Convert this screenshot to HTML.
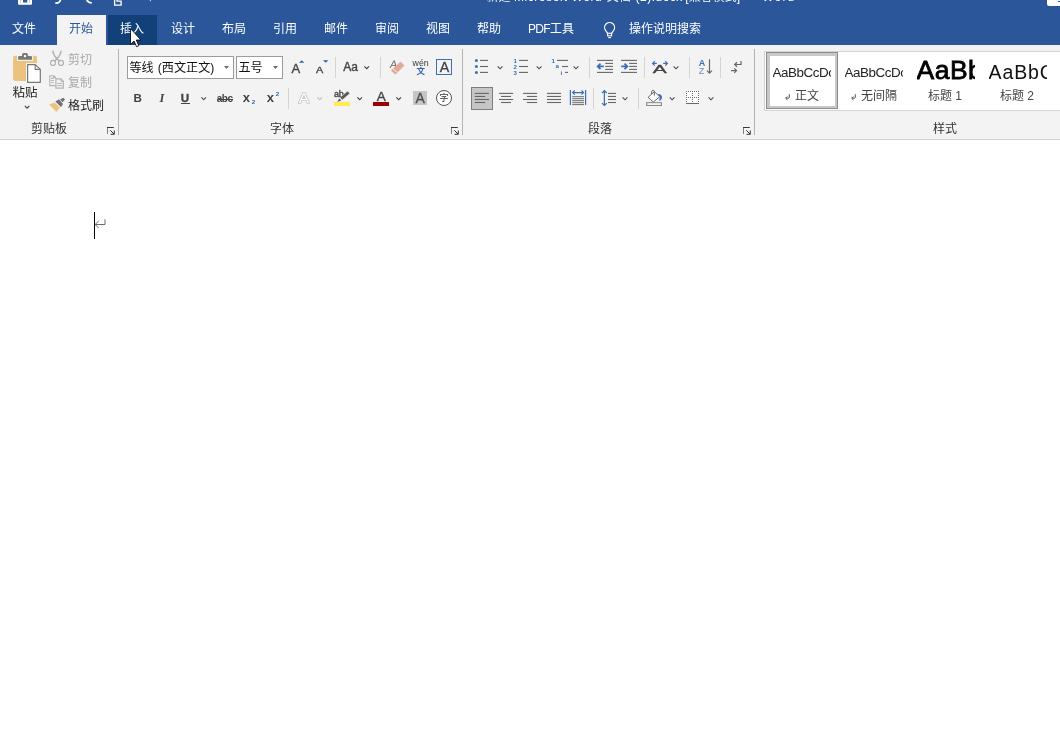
<!DOCTYPE html>
<html lang="zh-CN">
<head>
<meta charset="utf-8">
<title>Word</title>
<style>
*{box-sizing:border-box;margin:0;padding:0}
html,body{width:1060px;height:735px;overflow:hidden;background:#fff}
body{position:relative;font-family:"Liberation Sans","Noto Sans CJK SC",sans-serif;font-size:12.5px;color:#262626;font-weight:350}
#app{position:absolute;left:0;top:0;width:1060px;height:735px;overflow:hidden;will-change:transform}
.abs{position:absolute}
#title{position:absolute;left:0;top:0;width:1060px;height:45px;background:#2b579a}
#ribbon{position:absolute;left:0;top:45px;width:1060px;height:95px;background:#f3f3f3;border-bottom:1px solid #d2d2d2}
.tab{position:absolute;top:15.400px;height:29px;line-height:29px;color:#fff;font-weight:400;font-size:12px;white-space:nowrap}
.t{position:absolute;white-space:nowrap;line-height:16px;height:16px}
.g{color:#a8a8a8;font-weight:400}
.sep{position:absolute;width:1px;background:#d4d4d4}
.gsep{position:absolute;width:1px;background:#b4b4b4;top:49px;height:86px}
svg{position:absolute;overflow:visible}
.lbl{position:absolute;top:121.400px;height:16px;line-height:16px;font-size:12px;color:#333;font-weight:400;white-space:nowrap}
.box{position:absolute;top:56px;height:23px;background:#fff;border:1px solid #9c9c9c}
.chev{position:absolute;width:5.400px;height:3.600px}
.ic{position:absolute;white-space:nowrap;color:#444;font-weight:400}
.sb{-webkit-text-stroke:.35px currentColor}
.st{position:absolute;top:56px;height:28px;overflow:hidden;white-space:nowrap;color:#111;font-weight:400}
.st span{position:absolute;left:0}
.s1{font-size:13.400px;letter-spacing:-.45px;line-height:16px;top:8.500px;color:#222}
.s2{font-size:26.500px;font-weight:400;-webkit-text-stroke:.8px #000;letter-spacing:.5px;line-height:30px;top:-.700px;color:#000}
.s3{font-size:19.500px;letter-spacing:.9px;line-height:24px;top:4.200px;color:#111}
.sn{position:absolute;top:88.300px;height:16px;line-height:16px;font-size:12px;color:#444;font-weight:400;white-space:nowrap}
.ts{position:absolute;top:0}
</style>
</head>
<body>
<div id="app">
<div id="title"></div>
<div id="ribbon"></div>

<!-- TITLE-CONTENT -->
<div class="t" style="left:486.500px;top:-11.500px;color:#fff;font-size:12px"><span class="ts" style="left:0">新建</span><span class="ts" style="left:27.500px;letter-spacing:.55px">Microsoft Word</span><span class="ts" style="left:120.300px">文档</span><span class="ts" style="left:149px;letter-spacing:.5px">(2).docx</span><span class="ts" style="left:198.800px">[兼容模式]</span><span class="ts" style="left:261px">-</span><span class="ts" style="left:275.800px;letter-spacing:1.150px">Word</span></div>
<!-- quick access icons (clipped at top) -->
<svg style="left:0;top:0" width="160" height="8" viewBox="0 0 160 8"><path d="M18 -1H32V3.700a1 1 0 0 1-1 1H19a1 1 0 0 1-1-1z" fill="#fff"/><rect x="23" y="-1" width="4.300" height="3.500" fill="#2b579a"/><path d="M20.600 -1V2.800 M29.500 -1V2.800" stroke="#2b579a" stroke-width=".5" opacity=".6"/>
<path d="M55.300 3c3 .3 5.300-1.500 5.600-4.500" fill="none" stroke="#fff" stroke-width="1.700"/>
<path d="M91.800 2.900c-2.800 0-4.800-1.600-5.300-4.400" fill="none" stroke="#fff" stroke-width="1.700"/>
<path d="M114.600 -1V5.100H121.100V1.200H117V-1" fill="none" stroke="#fff" stroke-width="1.300"/>
<rect x="149.800" y="0" width="1.200" height="1.200" fill="#fff" opacity=".7"/></svg>
<div class="abs" style="left:1047px;top:0;width:13px;height:6px;background:#fff;border-bottom-left-radius:2px"></div>
<div class="abs" style="left:1058px;top:1px;width:2px;height:1.200px;background:#2b579a"></div>

<!-- TABS -->
<div class="abs" style="left:57px;top:15px;width:49px;height:30px;background:#f3f3f3"></div>
<div class="abs" style="left:108px;top:15px;width:49px;height:30px;background:#124078"></div>
<div class="tab" style="left:12px">文件</div>
<div class="tab" style="left:69px;color:#2b579a">开始</div>
<div class="tab" style="left:120px">插入</div>
<div class="tab" style="left:171px">设计</div>
<div class="tab" style="left:222px">布局</div>
<div class="tab" style="left:273px">引用</div>
<div class="tab" style="left:324px">邮件</div>
<div class="tab" style="left:375px">审阅</div>
<div class="tab" style="left:426px">视图</div>
<div class="tab" style="left:477px">帮助</div>
<div class="tab" style="left:528px"><span style="letter-spacing:-.7px">PDF</span>工具</div>
<svg style="left:0;top:0" width="630" height="45" viewBox="0 0 630 45"><path d="M607.600 33.300L605.600 30.500a5 5 0 1 1 8 0L611.600 33.300" fill="none" stroke="#fff" stroke-width="1.200" stroke-linejoin="round"/><rect x="607.600" y="33.300" width="4" height="2.500" fill="none" stroke="#fff" stroke-width="1.100"/><path d="M608.200 37.600H611" stroke="#fff" stroke-width="1.100"/></svg>
<div class="tab" style="left:629px">操作说明搜索</div>

<!-- CLIPBOARD -->
<svg style="left:0;top:0" width="130" height="140" viewBox="0 0 130 140">
<rect x="13.100" y="55.800" width="23.900" height="25.100" rx="1.800" fill="#ecc37e"/>
<rect x="17" y="54" width="16.100" height="6.900" fill="#f3f3f3"/>
<path d="M18.100 59.700V57.300c0-.7.500-1.200 1.200-1.200h2.800v-1.300c0-1 .8-1.700 1.800-1.700h2.200c1 0 1.800.7 1.800 1.700v1.300h2.900c.7 0 1.200.5 1.200 1.200v2.400z" fill="#7a7a7a"/>
<rect x="24" y="55.100" width="2" height="2" fill="#fff"/>
<rect x="26" y="63" width="12" height="18" fill="#f3f3f3"/>
<path d="M27.600 64.600h7.600l5.100 4.800v12.900H27.600z" fill="#fff" stroke="#777" stroke-width="1.200" stroke-linejoin="round"/>
<path d="M35.200 64.600v4.800h5.100" fill="none" stroke="#777" stroke-width="1.100"/>
<!-- scissors -->
<path d="M52.900 51.300c.3 3.200 2 5.500 4.100 7.500l2.300 2.300 M61 51.300c-.3 3.200-2 5.500-4.100 7.500l-2.300 2.300" fill="none" stroke="#b2b2b2" stroke-width="1.500" stroke-linecap="round"/>
<circle cx="53" cy="62.900" r="2.500" fill="none" stroke="#b2b2b2" stroke-width="1.200"/>
<circle cx="61" cy="62.900" r="2.500" fill="none" stroke="#b2b2b2" stroke-width="1.200"/>
<!-- copy -->
<path d="M55.400 85.600H49.800V75.800h4l2 1.900v0.600 M53.800 75.800v1.900h2" fill="none" stroke="#b2b2b2" stroke-width="1.100"/>
<path d="M51.100 78.400h2.700 M51.100 80.500h2.700 M51.100 82.600h2.700" stroke="#b2b2b2" stroke-width="1"/>
<path d="M55.900 78.800h5l2.400 2.400v7H55.900z" fill="#f3f3f3" stroke="#b2b2b2" stroke-width="1.200"/>
<path d="M60.900 78.800v2.400h2.400" fill="none" stroke="#b2b2b2" stroke-width="1"/>
<path d="M57.400 83.400h4.500 M57.400 85.600h4.500" stroke="#b2b2b2" stroke-width="1"/>
<!-- format painter -->
<path d="M49.100 104.500l5.400-2 5.300 5-3.300 4.400z" fill="#ecc37e"/>
<path d="M55.300 101.500l3.700-2.200 4 4.600-2 3z" fill="#707070"/>
<path d="M60 99.600l3.300-1.900 1.700 1.800-2.400 2.800z" fill="#707070"/>
<path d="M24.800 105.900l2.300 2.300 2.300-2.300" fill="none" stroke="#444" stroke-width="1.100"/>
</svg>
<div class="t" style="left:12.500px;top:85px;font-size:12.500px;color:#222;font-weight:400">粘贴</div>
<div class="t g" style="left:68px;top:52px;font-size:12px">剪切</div>
<div class="t g" style="left:68px;top:74.500px;font-size:12px">复制</div>
<div class="t" style="left:68px;top:98px;font-size:12px;color:#222;font-weight:400">格式刷</div>
<div class="lbl" style="left:31px">剪贴板</div>
<svg style="left:107px;top:127px" width="8" height="8" viewBox="0 0 8 8"><path d="M.5 7V1" stroke="#808080" stroke-width="1"/><path d="M0 .5H6.800" stroke="#3a3a3a" stroke-width="1"/><path d="M3.300 3.300L7 7" stroke="#333" stroke-width="1"/><path d="M7.300 3.500V7.300H3.500" fill="none" stroke="#333" stroke-width="1"/></svg>
<div class="gsep" style="left:118px"></div>

<!-- FONT -->
<div class="box" style="left:127px;width:107px"></div>
<div class="box" style="left:236px;width:47px"></div>
<div class="t" style="left:129.500px;top:59.500px;font-size:12.100px;color:#111;font-weight:400;word-spacing:.8px">等线 (西文正文)</div>
<div class="t" style="left:238.500px;top:59.500px;font-size:12.100px;color:#111;font-weight:400">五号</div>
<svg style="left:224px;top:65.500px" width="5" height="3" viewBox="0 0 5 3"><path d="M0 0h5L2.500 3z" fill="#6a6a6a"/></svg>
<svg style="left:273px;top:65.500px" width="5" height="3" viewBox="0 0 5 3"><path d="M0 0h5L2.500 3z" fill="#6a6a6a"/></svg>

<!-- grow / shrink -->
<div class="ic sb" style="left:291.400px;top:61.200px;font-size:13px;line-height:15px">A</div>
<svg style="left:298.800px;top:60px" width="5.400" height="3" viewBox="0 0 6 3"><path d="M0 3h6L3 0z" fill="#2f63b4"/></svg>
<div class="ic sb" style="left:316px;top:64.400px;font-size:9.700px;line-height:12px;transform:scaleX(1.120);transform-origin:0 0">A</div>
<svg style="left:322.800px;top:60px" width="5.400" height="3" viewBox="0 0 6 3"><path d="M0 0h6L3 3z" fill="#2f63b4"/></svg>
<div class="sep" style="left:335px;top:57px;height:21px"></div>
<div class="ic sb" style="left:343.200px;top:59px;font-size:12px;line-height:16px;letter-spacing:.1px">Aa</div>
<svg class="chev" style="left:364px;top:65.5px" viewBox="0 0 6 4"><path d="M.4 .5L3 3l2.600-2.500" fill="none" stroke="#444" stroke-width="1.300"/></svg>
<div class="sep" style="left:380px;top:57px;height:21px"></div>
<!-- clear formatting -->
<div class="ic" style="left:389.600px;top:57.800px;font-size:11px;line-height:13px;color:#666;transform:skewX(-8deg)">A</div>
<svg style="left:390px;top:61px" width="15" height="14" viewBox="0 0 15 14"><path d="M10.500 1l3.500 3.500-8.600 8.700-4.100-3.700z" fill="#e2aa95" stroke="#e2aa95" stroke-width=".8" stroke-linejoin="round"/><path d="M2.700 7.600l4.900 3.900" stroke="#f3f3f3" stroke-width=".9"/></svg>
<!-- phonetic guide -->
<div class="ic" style="left:412.600px;top:57.700px;font-size:8.800px;line-height:11px;color:#3a3a3a">wén</div>
<div class="ic" style="left:416.400px;top:65.300px;font-size:8.500px;line-height:12px;color:#2f63b4;font-weight:700">文</div>
<!-- char border -->
<div class="abs" style="left:436px;top:59px;width:16px;height:16px;border:1px solid #3a6fb7"></div>
<div class="ic sb" style="left:439.700px;top:58.600px;font-size:14.200px;line-height:16px">A</div>

<!-- row 2 -->
<div class="ic" style="left:133.500px;top:90px;font-size:11.600px;line-height:16px;font-weight:700">B</div>
<div class="ic" style="left:159.500px;top:90px;line-height:16px;font-style:italic;font-family:'Liberation Serif',serif;font-weight:700;font-size:12.500px">I</div>
<div class="ic sb" style="left:180.800px;top:90px;font-size:11.600px;line-height:16px;font-weight:700">U</div>
<div class="abs" style="left:180.500px;top:103px;width:9px;height:1px;background:#444"></div>
<svg class="chev" style="left:201px;top:96.8px" viewBox="0 0 6 4"><path d="M.4 .5L3 3l2.600-2.500" fill="none" stroke="#555" stroke-width="1.300"/></svg>
<div class="ic" style="left:216.800px;top:90.500px;font-size:10px;line-height:16px;letter-spacing:-.5px;font-weight:700">abc</div>
<div class="abs" style="left:216.500px;top:99px;width:16.500px;height:1px;background:#444"></div>
<div class="ic" style="left:242.800px;top:89.500px;font-size:13px;line-height:16px;font-weight:700">x</div>
<div class="ic" style="left:251.700px;top:98px;font-size:6.200px;line-height:8px;font-weight:700;color:#2f63b4">2</div>
<div class="ic" style="left:266.800px;top:89.500px;font-size:13px;line-height:16px;font-weight:700">x</div>
<div class="ic" style="left:275.800px;top:90.400px;font-size:6.200px;line-height:8px;font-weight:700;color:#2f63b4">2</div>
<div class="sep" style="left:288px;top:88px;height:21px"></div>
<!-- text effects -->
<svg style="left:295.700px;top:89px" width="16" height="16" viewBox="0 0 16 16"><text x="8" y="14.200" text-anchor="middle" font-family="Liberation Sans, sans-serif" font-size="15.500" fill="#fff" stroke="#c4c4c4" stroke-width="1.700" stroke-linejoin="round" paint-order="stroke">A</text></svg>
<svg class="chev" style="left:317px;top:96.8px" viewBox="0 0 6 4"><path d="M.4 .5L3 3l2.600-2.500" fill="none" stroke="#c0c0c0" stroke-width="1.300"/></svg>
<!-- highlight -->
<div class="ic sb" style="left:334px;top:89.300px;font-size:9px;line-height:11px;letter-spacing:-.2px">ab</div>
<svg style="left:336px;top:90px" width="15" height="13" viewBox="0 0 15 13"><path d="M1.300 11.900l2-3.300 2 1.900z" fill="#5a5a5a"/><path d="M4 7.600L11.600 1l2.200 2.500-7.600 6.600z" fill="#5a5a5a" stroke="#f3f3f3" stroke-width=".5"/></svg>
<div class="abs" style="left:334px;top:102px;width:16px;height:4px;background:#ffec50"></div>
<svg class="chev" style="left:357px;top:96.8px" viewBox="0 0 6 4"><path d="M.4 .5L3 3l2.600-2.500" fill="none" stroke="#444" stroke-width="1.300"/></svg>
<!-- font color -->
<div class="ic sb" style="left:376.800px;top:88.600px;font-size:13.500px;line-height:16px">A</div>
<div class="abs" style="left:373px;top:102px;width:16px;height:4px;background:#9a0000"></div>
<svg class="chev" style="left:396px;top:96.8px" viewBox="0 0 6 4"><path d="M.4 .5L3 3l2.600-2.500" fill="none" stroke="#444" stroke-width="1.300"/></svg>
<!-- char shading -->
<div class="abs" style="left:413px;top:91px;width:14px;height:14px;background:#c6c6c6"></div>
<div class="ic sb" style="left:415.400px;top:90px;font-size:14px;line-height:16px;color:#505050">A</div>
<!-- enclosed char -->
<div class="abs" style="left:436px;top:90px;width:16px;height:16px;border:1px solid #555;border-radius:50%;background:#fff"></div>
<div class="ic" style="left:439.500px;top:92px;font-size:9px;line-height:12px;color:#333">字</div>

<div class="lbl" style="left:270px">字体</div>
<svg style="left:451px;top:127px" width="8" height="8" viewBox="0 0 8 8"><path d="M.5 7V1" stroke="#808080" stroke-width="1"/><path d="M0 .5H6.800" stroke="#3a3a3a" stroke-width="1"/><path d="M3.300 3.300L7 7" stroke="#333" stroke-width="1"/><path d="M7.300 3.500V7.300H3.500" fill="none" stroke="#333" stroke-width="1"/></svg>
<div class="gsep" style="left:462px"></div>

<!-- PARAGRAPH -->
<svg style="left:0;top:0" width="1060" height="140" viewBox="0 0 1060 140" font-family="Liberation Sans, sans-serif">
<circle cx="476.400" cy="60.4" r="1.500" fill="#3a6fb7"/><path d="M480 60.4H488" stroke="#666" stroke-width="1.1"/>
<circle cx="476.400" cy="66.5" r="1.500" fill="#3a6fb7"/><path d="M480 66.5H488" stroke="#666" stroke-width="1.1"/>
<circle cx="476.400" cy="72.4" r="1.500" fill="#3a6fb7"/><path d="M480 72.4H488" stroke="#666" stroke-width="1.1"/>
<path d="M497.7 66.4l2.400 2.400 2.400-2.400" fill="none" stroke="#4a4a4a" stroke-width="1.150"/>
<text x="513.400" y="62.9" font-size="6.200" font-weight="700" fill="#3a6fb7">1</text>
<text x="513.400" y="69" font-size="6.200" font-weight="700" fill="#3a6fb7">2</text>
<text x="513.400" y="75.1" font-size="6.200" font-weight="700" fill="#3a6fb7">3</text>
<path d="M519 60.4H528" stroke="#666" stroke-width="1.1"/>
<path d="M519 66.5H528" stroke="#666" stroke-width="1.1"/>
<path d="M519 72.4H528" stroke="#666" stroke-width="1.1"/>
<path d="M536.7 66.4l2.400 2.400 2.400-2.400" fill="none" stroke="#4a4a4a" stroke-width="1.150"/>
<text x="551.500" y="62.900" font-size="6.200" font-weight="700" fill="#3a6fb7">1</text><path d="M557 60.4H568" stroke="#666" stroke-width="1.1"/>
<text x="555.600" y="67.900" font-size="6.200" font-weight="700" fill="#3a6fb7">a</text><path d="M562 66.5H568" stroke="#666" stroke-width="1.1"/>
<text x="560.600" y="74.800" font-size="6.200" font-weight="700" fill="#3a6fb7">i</text><path d="M565 72.4H568" stroke="#666" stroke-width="1.1"/>
<path d="M573.6 66.4l2.400 2.400 2.400-2.400" fill="none" stroke="#4a4a4a" stroke-width="1.150"/>
<path d="M597 60.4H613" stroke="#666" stroke-width="1.1"/><path d="M597 72.4H613" stroke="#666" stroke-width="1.1"/><path d="M605.2 63.4H613" stroke="#666" stroke-width="1.1"/><path d="M605.2 66.4H613" stroke="#666" stroke-width="1.1"/><path d="M605.2 69.4H613" stroke="#666" stroke-width="1.1"/>
<path d="M603.800 66.400H598.200 M600.500 63.600l-2.800 2.800 2.800 2.800" fill="none" stroke="#3a6fb7" stroke-width="1.800"/>
<path d="M621 60.4H637" stroke="#666" stroke-width="1.1"/><path d="M621 72.4H637" stroke="#666" stroke-width="1.1"/><path d="M629.2 63.4H637" stroke="#666" stroke-width="1.1"/><path d="M629.2 66.4H637" stroke="#666" stroke-width="1.1"/><path d="M629.2 69.4H637" stroke="#666" stroke-width="1.1"/>
<path d="M621.200 66.400H626.800 M624.500 63.600l2.800 2.800-2.800 2.800" fill="none" stroke="#3a6fb7" stroke-width="1.800"/>
<text transform="translate(652.800 73) scale(1.900 1)" font-size="11" fill="#444" stroke="#444" stroke-width=".3">A</text>
<path d="M656.800 63.400H652.800 M654.800 61.200l-2.200 2.200 2.200 2.200 M663.200 63.400H667.200 M665.200 61.200l2.200 2.200-2.200 2.200" fill="none" stroke="#3a6fb7" stroke-width="1.200"/>
<path d="M673.6 66.4l2.400 2.400 2.400-2.400" fill="none" stroke="#4a4a4a" stroke-width="1.150"/>
<text x="698.800" y="65.700" font-size="9" font-weight="700" fill="#3a6fb7">A</text>
<text x="698.700" y="73.900" font-size="9" fill="#6d8fc6">Z</text>
<path d="M709.500 59.200V73 M707 70.600l2.500 2.600 2.500-2.600" fill="none" stroke="#666" stroke-width="1.200"/>
<path d="M741 61.100V64.500H735 M737 62.300l-2.300 2.200 2.300 2.200 M731 70.600H736.300 M734.300 68.300l2.300 2.300-2.300 2.300" fill="none" stroke="#666" stroke-width="1.200"/>
<rect x="471.500" y="87.500" width="21" height="22" fill="#c6c6c6" stroke="#7e7e7e" stroke-width="1"/>
<path d="M474.8 93.4H489" stroke="#666" stroke-width="1.1"/><path d="M474.8 96.45H485.2" stroke="#666" stroke-width="1.1"/><path d="M474.8 99.5H489" stroke="#666" stroke-width="1.1"/><path d="M474.8 102.5H485.2" stroke="#666" stroke-width="1.1"/>
<path d="M499 93.4H513.2" stroke="#666" stroke-width="1.1"/><path d="M501 96.45H511" stroke="#666" stroke-width="1.1"/><path d="M499 99.5H513.2" stroke="#666" stroke-width="1.1"/><path d="M501 102.5H511" stroke="#666" stroke-width="1.1"/>
<path d="M523 93.4H537.1" stroke="#666" stroke-width="1.1"/><path d="M526.9 96.45H537.1" stroke="#666" stroke-width="1.1"/><path d="M523 99.5H537.1" stroke="#666" stroke-width="1.1"/><path d="M526.9 102.5H537.1" stroke="#666" stroke-width="1.1"/>
<path d="M547 93.4H561" stroke="#666" stroke-width="1.1"/><path d="M547 96.45H561" stroke="#666" stroke-width="1.1"/><path d="M547 99.5H561" stroke="#666" stroke-width="1.1"/><path d="M547 102.5H561" stroke="#666" stroke-width="1.1"/>
<path d="M570.400 90V105 M585.600 90V105" stroke="#3a6fb7" stroke-width="1.200"/>
<path d="M572.600 92.600H583.600 M574.700 90.500l-2.100 2.100 2.100 2.100 M581.500 90.500l2.100 2.100-2.100 2.100" fill="none" stroke="#3a6fb7" stroke-width="1.100"/>
<path d="M572.2 96.7H584" stroke="#666" stroke-width=".95"/><path d="M572.2 98.7H584" stroke="#666" stroke-width=".95"/><path d="M572.2 100.7H584" stroke="#666" stroke-width=".95"/><path d="M572.2 102.7H584" stroke="#666" stroke-width=".95"/><path d="M572.2 104.6H584" stroke="#666" stroke-width=".95"/>
<path d="M604.400 90.800V105.300 M602 93l2.400-2.400 2.400 2.400 M602 103.100l2.400 2.400 2.400-2.400" fill="none" stroke="#3a6fb7" stroke-width="1.200"/>
<path d="M608 93.4H616" stroke="#666" stroke-width="1.1"/><path d="M608 96.45H616" stroke="#666" stroke-width="1.1"/><path d="M608 99.5H616" stroke="#666" stroke-width="1.1"/><path d="M608 102.5H616" stroke="#666" stroke-width="1.1"/>
<path d="M622.6 97.4l2.400 2.400 2.400-2.400" fill="none" stroke="#4a4a4a" stroke-width="1.150"/>
<rect x="646.700" y="102.700" width="14.700" height="2.700" fill="#fff" stroke="#7c7c7c" stroke-width="1"/>
<path d="M658 94C660 93.800 661.700 95 662 96.900C662.200 98.600 660.800 100.200 659.200 101.100L659.800 96.900Z" fill="#3a6fb7"/>
<path d="M654.400 91.700l5.300 5.100-6.400 5.200-5.200-4.700z" fill="#fff" stroke="#5c5c5c" stroke-width=".9" stroke-linejoin="round"/>
<path d="M651.700 94V91.400c0-.6.400-1 1-1h.6c.6 0 1 .4 1 1V95.600" fill="none" stroke="#5c5c5c" stroke-width=".95"/>
<path d="M669.7 97.4l2.400 2.400 2.400-2.400" fill="none" stroke="#4a4a4a" stroke-width="1.150"/>
<rect x="685.700" y="90.700" width="13.600" height="13.600" fill="#fff"/>
<path d="M686.00 91.00h1v1h-1zM688.00 91.00h1v1h-1zM690.00 91.00h1v1h-1zM692.00 91.00h1v1h-1zM694.00 91.00h1v1h-1zM696.00 91.00h1v1h-1zM698.00 91.00h1v1h-1zM686.00 93.00h1v1h-1zM692.00 93.00h1v1h-1zM698.00 93.00h1v1h-1zM686.00 94.95h1v1h-1zM692.00 94.95h1v1h-1zM698.00 94.95h1v1h-1zM686.00 96.90h1v1h-1zM688.00 96.90h1v1h-1zM690.00 96.90h1v1h-1zM692.00 96.90h1v1h-1zM694.00 96.90h1v1h-1zM696.00 96.90h1v1h-1zM698.00 96.90h1v1h-1zM686.00 98.90h1v1h-1zM692.00 98.90h1v1h-1zM698.00 98.90h1v1h-1zM686.00 100.90h1v1h-1zM692.00 100.90h1v1h-1zM698.00 100.90h1v1h-1z" fill="#6a6a6a"/>
<path d="M686 103.500H699" stroke="#6a6a6a" stroke-width="1.100"/>
<path d="M708.6 97.4l2.400 2.400 2.400-2.400" fill="none" stroke="#4a4a4a" stroke-width="1.150"/>
</svg>
<div class="sep" style="left:589px;top:57px;height:21px"></div>
<div class="sep" style="left:644px;top:57px;height:21px"></div>
<div class="sep" style="left:689px;top:57px;height:21px"></div>
<div class="sep" style="left:720px;top:57px;height:21px"></div>
<div class="sep" style="left:593px;top:88px;height:21px"></div>
<div class="sep" style="left:638px;top:88px;height:21px"></div>
<div class="lbl" style="left:588px">段落</div>
<svg style="left:743px;top:127px" width="8" height="8" viewBox="0 0 8 8"><path d="M.5 7V1" stroke="#808080" stroke-width="1"/><path d="M0 .5H6.800" stroke="#3a3a3a" stroke-width="1"/><path d="M3.300 3.300L7 7" stroke="#333" stroke-width="1"/><path d="M7.300 3.500V7.300H3.500" fill="none" stroke="#333" stroke-width="1"/></svg>
<div class="gsep" style="left:754px"></div>

<!-- STYLES -->
<div class="abs" style="left:764px;top:51px;width:300px;height:60px;background:#fff;border:1px solid #d4d4d4"></div>
<div class="abs" style="left:766px;top:52px;width:72px;height:57px;border:1px solid #8c8c8c;background:#c8c8c8"></div>
<div class="abs" style="left:769.500px;top:55.500px;width:65px;height:50px;background:#fff"></div>
<div class="st" style="left:772.500px;width:58.300px"><span class="s1">AaBbCcDc</span></div>
<div class="st" style="left:844.500px;width:58.700px"><span class="s1">AaBbCcDc</span></div>
<div class="st" style="left:916.500px;width:58.300px"><span class="s2">AaBb</span></div>
<div class="st" style="left:988.500px;width:58.700px"><span class="s3">AaBbC</span></div>
<svg style="left:784.700px;top:94px" width="6" height="6" viewBox="0 0 6 6"><path d="M4.300 .2V3.200Q4.300 4.200 3.300 4.200H.9 M2.400 2.400L.6 4.200l1.800 1.700" fill="none" stroke="#555" stroke-width="1"/></svg>
<div class="sn" style="left:795px">正文</div>
<svg style="left:851.200px;top:94px" width="6" height="6" viewBox="0 0 6 6"><path d="M4.300 .2V3.200Q4.300 4.200 3.300 4.200H.9 M2.400 2.400L.6 4.200l1.800 1.700" fill="none" stroke="#555" stroke-width="1"/></svg>
<div class="sn" style="left:861px">无间隔</div>
<div class="sn" style="left:928px">标题 1</div>
<div class="sn" style="left:1000px">标题 2</div>
<div class="lbl" style="left:933px">样式</div>

<!-- DOC -->
<div class="abs" style="left:94px;top:212px;width:1.300px;height:27px;background:#000"></div>
<svg style="left:93.600px;top:218px" width="12" height="12" viewBox="0 0 12 12"><path d="M11 1.300V6.500H1.200 M4.800 3L1 6.500l3.800 3.500" fill="none" stroke="#6a6a6a" stroke-width="1"/></svg>

<!-- CURSOR -->
<svg style="left:129.900px;top:28.200px" width="13" height="20" viewBox="0 0 13 20"><path d="M.5 .6V16.400L4 13l2.600 5.700 2.200-1L6.300 12H11z" fill="#fff" stroke="#000" stroke-width=".85" stroke-linejoin="miter"/></svg>

</div>
</body>
</html>
